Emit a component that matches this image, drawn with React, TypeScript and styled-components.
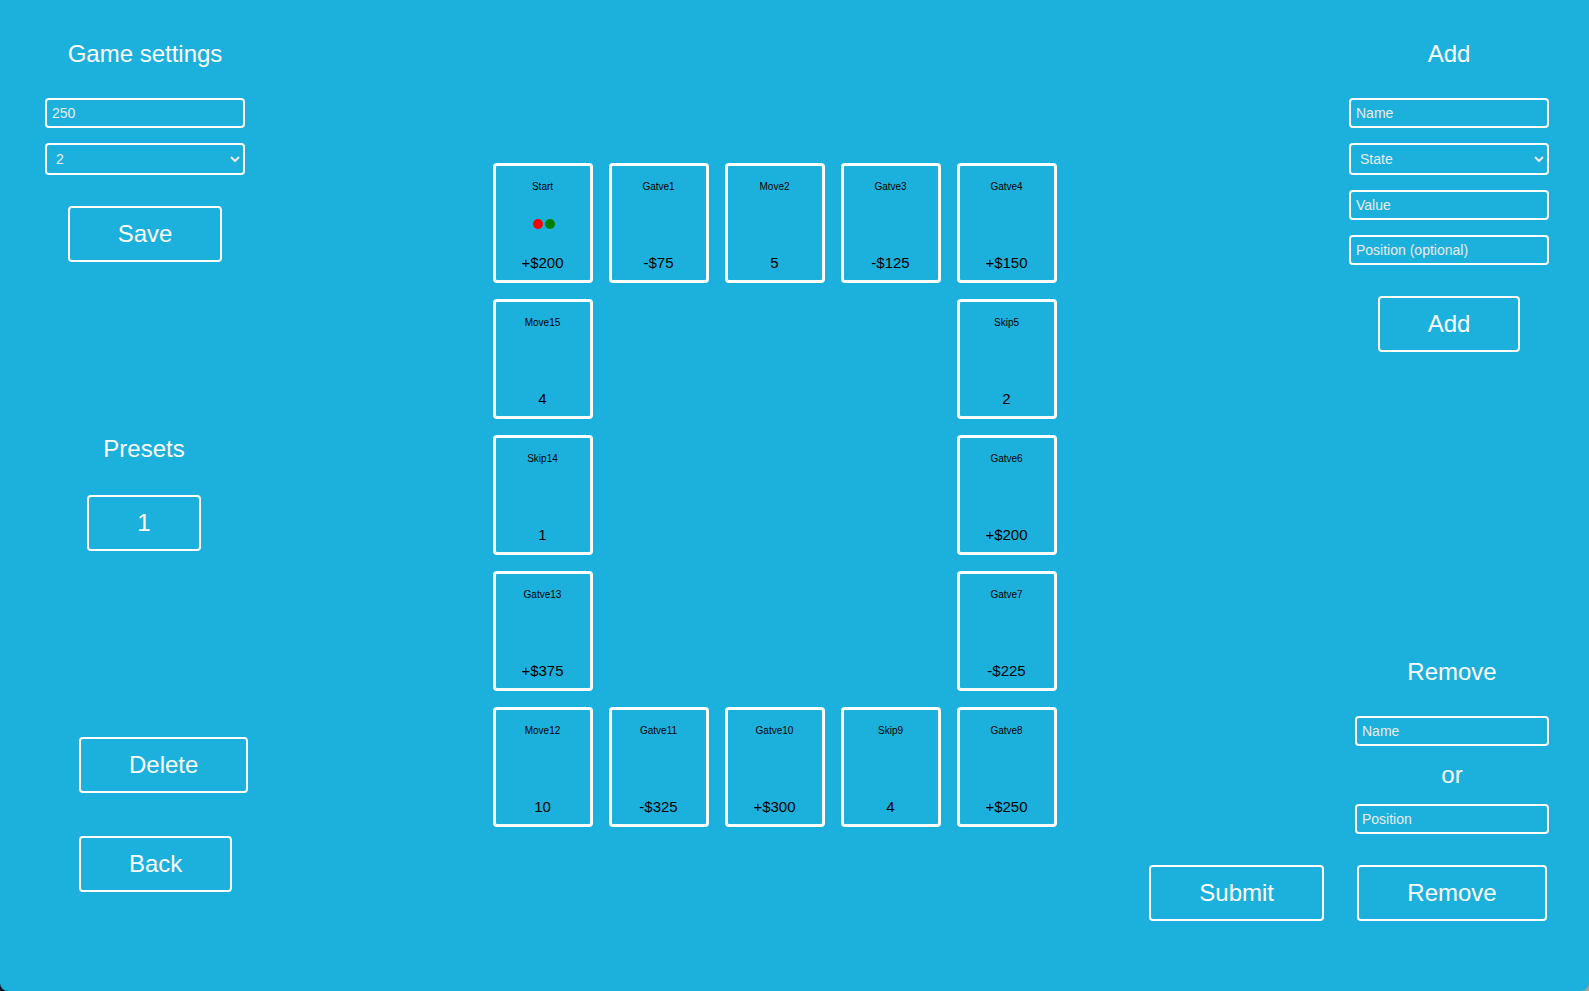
import React from "react";
import styled, { createGlobalStyle } from "styled-components";

const GlobalStyle = createGlobalStyle`
  * { box-sizing: border-box; }
  body {
    margin: 0;
    background: linear-gradient(to right, #10141a 50%, #c0a080 50%);
    font-family: Arial, "Liberation Sans", sans-serif;
    color: #fff;
  }
`;

const Page = styled.div`
  display: grid;
  grid-template-columns: 1fr auto 1fr;
  min-height: 100vh;
  padding-right: 40px;
  background: #1cb0dd;
  border-radius: 0 0 8px 8px;
`;

const LeftColumn = styled.aside`
  display: grid;
  grid-template-rows: 1fr auto 1fr;
  width: 290px;
  padding: 40px 0 46px;
`;

const RightColumn = styled.aside`
  display: flex;
  flex-direction: column;
  align-items: flex-end;
  justify-content: space-between;
  padding: 40px 0 70px;
`;

const Panel = styled.form<{ $width: number }>`
  display: flex;
  flex-direction: column;
  align-items: center;
  gap: 15px;
  width: ${({ $width }) => $width}px;
  justify-self: center;
`;

const Title = styled.h2`
  margin: 0 0 15px;
  font-size: 24px;
  font-weight: 400;
  line-height: 28px;
`;

const Separator = styled.span`
  font-size: 24px;
  line-height: 28px;
`;

const Input = styled.input`
  width: 100%;
  height: 30px;
  padding: 5px;
  border: 2px solid #fff;
  border-radius: 4px;
  background: transparent;
  color: #ebebeb;
  font-family: inherit;
  font-size: 14px;

  &::placeholder {
    color: #ebebeb;
    opacity: 1;
  }
`;

const Select = styled.select`
  width: 100%;
  height: 32px;
  padding: 5px;
  border: 2px solid #fff;
  border-radius: 4px;
  background: transparent;
  color: #ebebeb;
  font-family: inherit;
  font-size: 14px;

  option {
    color: #000;
  }
`;

const Button = styled.button`
  height: 56px;
  padding: 0 48px;
  border: 2px solid #fff;
  border-radius: 4px;
  background: transparent;
  color: #fff;
  font-family: inherit;
  font-size: 24px;
  line-height: 28px;
  cursor: pointer;

  ${Panel} > & {
    margin-top: 16px;
  }
`;

const Presets = styled.section`
  display: flex;
  flex-direction: column;
  align-items: center;
  gap: 17px;
  padding-right: 2px;
`;

const Actions = styled.div`
  display: flex;
  flex-direction: column;
  align-items: flex-start;
  align-self: end;
  gap: 43px;
  padding: 0 0 53px 79px;
`;

const BottomRow = styled.div`
  display: flex;
  align-items: flex-end;
  gap: 31px;
`;

const Board = styled.main`
  display: grid;
  grid-template-columns: repeat(5, 100px);
  grid-auto-rows: 120px;
  gap: 16px;
  align-content: center;
  padding-bottom: 1px;
`;

const Tile = styled.article<{ $row: number; $column: number }>`
  grid-row: ${({ $row }) => $row};
  grid-column: ${({ $column }) => $column};
  display: flex;
  flex-direction: column;
  align-items: center;
  justify-content: space-between;
  padding: 15px 0 8px;
  border: 3px solid #fff;
  border-radius: 4px;
  color: #000;
`;

const TileName = styled.span`
  font-size: 10px;
  line-height: 12px;
`;

const TileValue = styled.span`
  font-size: 15px;
  line-height: 18px;
`;

const Players = styled.div`
  display: flex;
`;

const Player = styled.span<{ $color: string }>`
  width: 10px;
  height: 10px;
  margin-left: 2px;
  border-radius: 50%;
  background: ${({ $color }) => $color};
`;

type TileData = { name: string; value: string; players?: string[] };

const tiles: TileData[] = [
  { name: "Start", value: "+$200", players: ["red", "green"] },
  { name: "Gatve1", value: "-$75" },
  { name: "Move2", value: "5" },
  { name: "Gatve3", value: "-$125" },
  { name: "Gatve4", value: "+$150" },
  { name: "Skip5", value: "2" },
  { name: "Gatve6", value: "+$200" },
  { name: "Gatve7", value: "-$225" },
  { name: "Gatve8", value: "+$250" },
  { name: "Skip9", value: "4" },
  { name: "Gatve10", value: "+$300" },
  { name: "Gatve11", value: "-$325" },
  { name: "Move12", value: "10" },
  { name: "Gatve13", value: "+$375" },
  { name: "Skip14", value: "1" },
  { name: "Move15", value: "4" },
];

// Tiles run clockwise round the board, starting in the top left corner.
function cell(index: number) {
  if (index < 5) return { row: 1, column: index + 1 };
  if (index < 9) return { row: index - 3, column: 5 };
  if (index < 13) return { row: 5, column: 13 - index };
  return { row: 17 - index, column: 1 };
}

export default function App() {
  return (
    <>
      <GlobalStyle />
      <Page>
        <LeftColumn>
          <Panel $width={200}>
            <Title>Game settings</Title>
            <Input aria-label="Starting money" defaultValue="250" />
            <Select aria-label="Number of players" defaultValue="2">
              <option>2</option>
              <option>3</option>
              <option>4</option>
            </Select>
            <Button type="button">Save</Button>
          </Panel>
          <Presets>
            <Title>Presets</Title>
            <Button type="button">1</Button>
          </Presets>
          <Actions>
            <Button type="button">Delete</Button>
            <Button type="button">Back</Button>
          </Actions>
        </LeftColumn>

        <Board>
          {tiles.map((tile, index) => {
            const { row, column } = cell(index);
            return (
              <Tile key={tile.name} $row={row} $column={column}>
                <TileName>{tile.name}</TileName>
                {tile.players && (
                  <Players>
                    {tile.players.map((color) => (
                      <Player key={color} $color={color} />
                    ))}
                  </Players>
                )}
                <TileValue>{tile.value}</TileValue>
              </Tile>
            );
          })}
        </Board>

        <RightColumn>
          <Panel $width={200}>
            <Title>Add</Title>
            <Input aria-label="Name" placeholder="Name" />
            <Select aria-label="State" defaultValue="State">
              <option>State</option>
              <option>Move</option>
              <option>Skip</option>
            </Select>
            <Input aria-label="Value" placeholder="Value" />
            <Input aria-label="Position (optional)" placeholder="Position (optional)" />
            <Button type="button">Add</Button>
          </Panel>
          <BottomRow>
            <Button type="button">Submit</Button>
            <Panel $width={194}>
              <Title>Remove</Title>
              <Input aria-label="Name to remove" placeholder="Name" />
              <Separator>or</Separator>
              <Input aria-label="Position to remove" placeholder="Position" />
              <Button type="button">Remove</Button>
            </Panel>
          </BottomRow>
        </RightColumn>
      </Page>
    </>
  );
}
